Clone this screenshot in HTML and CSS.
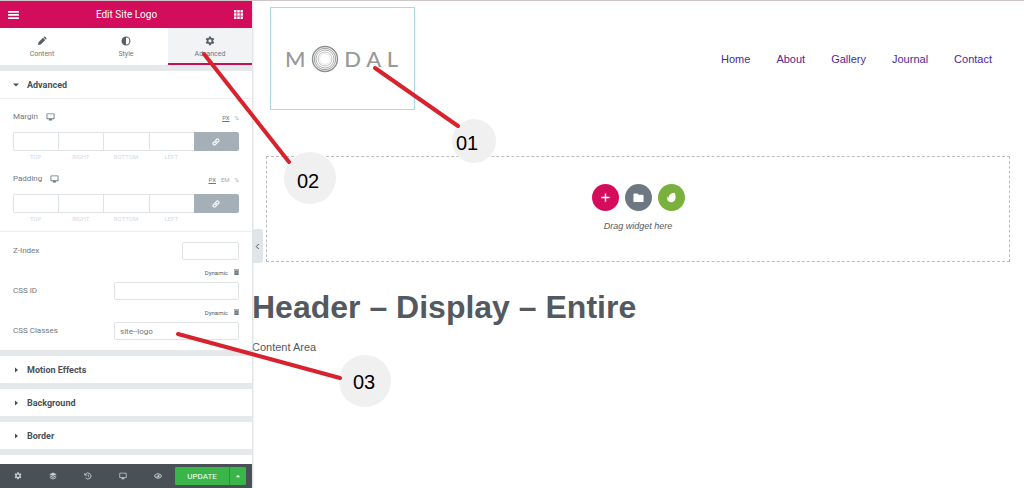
FILE: index.html
```html
<!DOCTYPE html>
<html lang="en">
<head>
<meta charset="utf-8">
<title>Edit Site Logo</title>
<link rel="stylesheet" href="styles.css">
</head>
<body>
<svg class="sprite" aria-hidden="true">
  <symbol id="gear" viewBox="0 0 24 24"><path fill-rule="evenodd" d="M9.700 1h4.600l.6 3.100 1.900 1.100 3-1.100 2.300 4-2.400 2.100v2.600l2.400 2.100-2.300 4-3-1.100-1.900 1.100-.6 3.100H9.700l-.6-3.100-1.900-1.100-3 1.100-2.300-4 2.400-2.100v-2.600L1.900 8.100l2.300-4 3 1.100 1.900-1.100zM12 7.700a3.800 3.800 0 1 0 0 7.600 3.800 3.800 0 0 0 0-7.600z"/></symbol>
  <symbol id="screen" viewBox="0 0 20 18"><path fill-rule="evenodd" d="M2 1h16a1 1 0 0 1 1 1v11a1 1 0 0 1-1 1h-5l1 3H6l1-3H2a1 1 0 0 1-1-1V2a1 1 0 0 1 1-1zm1 2v9h14V3z"/></symbol>
  <symbol id="link" viewBox="0 0 20 20"><g fill="none" stroke="currentColor" stroke-width="2.800" stroke-linecap="round"><path d="M8.500 11.500a3.600 3.600 0 0 1 0-5l3-3a3.500 3.500 0 0 1 5 5l-1.500 1.500"/><path d="M11.500 8.500a3.600 3.600 0 0 1 0 5l-3 3a3.500 3.500 0 0 1-5-5L5 10"/></g></symbol>
  <symbol id="trash" viewBox="0 0 10 12"><path d="M0 1h10v1.800H0zM1 3.800h8V12H1z"/><path d="M3.200 5v5.500M5 5v5.500M6.800 5v5.500" stroke="#fff" stroke-width=".6"/></symbol>
</svg>

<div class="app">
  <aside class="panel">
    <header class="panel-header">
      <button class="icon-button" aria-label="Menu"><svg class="menu-icon" viewBox="0 0 12 10"><path d="M0 1h12v2H0zM0 4.500h12v2H0zM0 8h12v2H0z"/></svg></button>
      <h1 class="panel-title">Edit Site Logo</h1>
      <button class="icon-button" aria-label="Widgets"><svg class="grid-icon" viewBox="0 0 11 11"><path d="M0 0h3v3H0zM4 0h3v3H4zM8 0h3v3H8zM0 4h3v3H0zM4 4h3v3H4zM8 4h3v3H8zM0 8h3v3H0zM4 8h3v3H4zM8 8h3v3H8z"/></svg></button>
    </header>
    <nav class="tabs">
      <button class="tab"><svg class="tab-icon" viewBox="0 0 20 20"><path d="M2 18l1-5.500L12 3.500l4.500 4.500-9 9zM13 2.500l1.200-1.200a1.500 1.500 0 0 1 2 0l2.500 2.500a1.500 1.500 0 0 1 0 2L17.500 7z"/></svg>Content</button>
      <button class="tab"><svg class="tab-icon" viewBox="0 0 20 20"><path fill-rule="evenodd" d="M10 1a9 9 0 1 1 0 18 9 9 0 0 1 0-18zm0 2.200a6.800 6.800 0 0 0 0 13.600z" transform="rotate(180 10 10)"/></svg>Style</button>
      <button class="tab tab-active"><svg class="tab-icon"><use href="#gear"/></svg>Advanced</button>
    </nav>
    <div class="sections">
      <section class="section">
        <button class="section-title"><svg class="caret" viewBox="0 0 8 8"><path d="M1 2.500h6L4 5.500z"/></svg>Advanced</button>
        <div class="controls">
          <fieldset class="dimension">
            <div class="dimension-head">
              <span class="label">Margin</span><svg class="device"><use href="#screen"/></svg>
              <span class="units"><button class="unit unit-active">PX</button><button class="unit">%</button></span>
            </div>
            <div class="dimension-grid">
              <input class="side" id="mt"><input class="side" id="mr"><input class="side" id="mb"><input class="side" id="ml">
              <button class="link-button" aria-label="Link values"><svg class="link-icon"><use href="#link"/></svg></button>
              <label class="side-name" for="mt">TOP</label><label class="side-name" for="mr">RIGHT</label><label class="side-name" for="mb">BOTTOM</label><label class="side-name" for="ml">LEFT</label>
            </div>
          </fieldset>
          <fieldset class="dimension">
            <div class="dimension-head">
              <span class="label">Padding</span><svg class="device"><use href="#screen"/></svg>
              <span class="units"><button class="unit unit-active">PX</button><button class="unit">EM</button><button class="unit">%</button></span>
            </div>
            <div class="dimension-grid">
              <input class="side" id="pt"><input class="side" id="pr"><input class="side" id="pb"><input class="side" id="pl">
              <button class="link-button" aria-label="Link values"><svg class="link-icon"><use href="#link"/></svg></button>
              <label class="side-name" for="pt">TOP</label><label class="side-name" for="pr">RIGHT</label><label class="side-name" for="pb">BOTTOM</label><label class="side-name" for="pl">LEFT</label>
            </div>
          </fieldset>
          <div class="fields">
            <div class="field"><label class="label" for="z">Z-Index</label><input class="text-box text-box-small" id="z"></div>
            <div class="dynamic">Dynamic<svg class="trash"><use href="#trash"/></svg></div>
            <div class="field"><label class="label" for="cid">CSS ID</label><input class="text-box" id="cid"></div>
            <div class="dynamic">Dynamic<svg class="trash"><use href="#trash"/></svg></div>
            <div class="field"><label class="label" for="cls">CSS Classes</label><input class="text-box" id="cls" value="site--logo"></div>
          </div>
        </div>
      </section>
      <section class="section"><button class="section-title"><svg class="caret" viewBox="0 0 8 8"><path d="M3 1.500v5l3-2.500z"/></svg>Motion Effects</button></section>
      <section class="section"><button class="section-title"><svg class="caret" viewBox="0 0 8 8"><path d="M3 1.500v5l3-2.500z"/></svg>Background</button></section>
      <section class="section"><button class="section-title"><svg class="caret" viewBox="0 0 8 8"><path d="M3 1.500v5l3-2.500z"/></svg>Border</button></section>
      <section class="section section-next"></section>
    </div>
    <footer class="panel-footer">
      <button class="tool" aria-label="Settings"><svg class="tool-icon"><use href="#gear"/></svg></button>
      <button class="tool" aria-label="Navigator"><svg class="tool-icon" viewBox="0 0 20 20"><path d="M10 1l9 4.500-9 4.500-9-4.500zM3 8.500l7 3.500 7-3.500 2 1.300-9 4.500-9-4.500zM3 13l7 3.500 7-3.500 2 1.300-9 4.700-9-4.700z"/></svg></button>
      <button class="tool" aria-label="History"><svg class="tool-icon" viewBox="0 0 20 20"><g fill="none" stroke="currentColor" stroke-width="2.200"><path d="M4 5.500a7.500 7.500 0 1 1 0 9M10.500 6v4.500l3 2"/></g><path d="M1 2v7h7z"/></svg></button>
      <button class="tool" aria-label="Responsive mode"><svg class="tool-icon"><use href="#screen"/></svg></button>
      <button class="tool" aria-label="Preview"><svg class="tool-icon" viewBox="0 0 20 20"><path fill-rule="evenodd" d="M0 10c5-9 15-9 20 0-5 9-15 9-20 0zm2.500 0c3.500 6 11.500 6 15 0-3.500-6-11.500-6-15 0z"/><path d="M10 6a4 4 0 1 1-4 4l3 .5z"/></svg></button>
      <div class="publish">
        <button class="update">UPDATE</button>
        <button class="update-more" aria-label="Save options"><svg class="caret-up" viewBox="0 0 8 6"><path d="M1 5h6L4 1z"/></svg></button>
      </div>
    </footer>
    <button class="collapse" aria-label="Hide panel"><svg class="chevron" viewBox="0 0 6 8"><path d="M4.500 1l-3 3 3 3" fill="none" stroke="currentColor" stroke-width="1.200"/></svg></button>
  </aside>

  <main class="preview">
    <div class="site-header">
      <a class="logo" href="#" aria-label="Modal">
        <span>M</span>
        <svg class="logo-rings" viewBox="0 0 28 28"><g fill="none" stroke="#8f8f8f"><circle cx="14" cy="14" r="12.500" stroke-width="1.400"/><circle cx="14" cy="14" r="10.700" stroke-width=".9"/><circle cx="14" cy="14" r="9" stroke="#aaa" stroke-width=".9"/><circle cx="14" cy="14" r="7" stroke="#b8b8b8" stroke-width=".8"/><circle cx="14" cy="14" r="5.400" stroke="#d8d8d8" stroke-width=".6"/></g></svg>
        <span>D</span><span>A</span><span>L</span>
      </a>
      <nav class="site-nav"><a href="#">Home</a><a href="#">About</a><a href="#">Gallery</a><a href="#">Journal</a><a href="#">Contact</a></nav>
    </div>
    <div class="drop-zone">
      <div class="drop-actions">
        <button class="round round-add" aria-label="Add section"><svg class="round-icon" viewBox="0 0 12 12"><path d="M5.200 1.500h1.600v3.700h3.700v1.600H6.800v3.700H5.200V6.800H1.500V5.200h3.700z"/></svg></button>
        <button class="round round-folder" aria-label="Add template"><svg class="round-icon" viewBox="0 0 12 12"><path d="M1.500 1.500h3.300L6.200 3h4.300a1 1 0 0 1 1 1v6a1 1 0 0 1-1 1h-9a1 1 0 0 1-1-1V2.500a1 1 0 0 1 1-1z"/></svg></button>
        <button class="round round-leaf" aria-label="Template kits"><svg class="round-icon" viewBox="0 0 12 12"><path d="M9.200.8c1.600 2 1.900 5.900.4 8.200-1.500 2.400-4.600 2.900-6.600 1.400C1 8.800.9 6.200 2 4.500c.1 1 .3 1.700.7 2.300C2.500 3.500 5.500 1 9.200.8z"/></svg></button>
      </div>
      <p class="drop-text">Drag widget here</p>
    </div>
    <h2 class="page-title">Header – Display – Entire</h2>
    <p class="page-text">Content Area</p>
  </main>

  <svg class="callouts" viewBox="0 0 1024 488">
    <g class="callout-discs"><circle cx="474" cy="141" r="22"/><circle cx="310" cy="178" r="26"/><circle cx="365" cy="381" r="26"/></g>
    <g class="callout-lines"><path d="M375 68L458 126"/><path d="M204 54L289 162"/><path d="M178 334L340 378"/></g>
    <g class="callout-numbers"><text x="467" y="150">01</text><text x="308" y="188">02</text><text x="364" y="389">03</text></g>
  </svg>
</div>
</body>
</html>
```
FILE: styles.css
```css
* { box-sizing: border-box; }
body { margin: 0; font-family: Roboto, sans-serif; color: #54595f; background: #fff; }
button { font: inherit; color: inherit; background: none; border: 0; padding: 0; }
svg { fill: currentColor; display: block; flex: none; }
p, h1, h2 { margin: 0; }
.sprite { display: none; }

.app { position: relative; display: flex; height: 100vh; overflow: hidden; border-top: 1px solid #cfc5c9; }

.panel { position: relative; display: flex; flex-direction: column; width: 252px; flex: none; background: #e6e9ec; box-shadow: 1px 0 2px #d5d8dc; }
.panel-header { display: flex; align-items: center; justify-content: space-between; height: 27px; flex: none; padding: 0 9px 0 8px; background: #d30c5c; color: #fff; }
.panel-title { font-size: 10px; font-weight: 400; }
.menu-icon { width: 11px; height: 9px; }
.grid-icon { width: 9px; height: 9px; }

.tabs { display: grid; grid-template-columns: repeat(3, 1fr); height: 37px; flex: none; background: #fff; }
.tab { display: flex; flex-direction: column; align-items: center; gap: 4px; padding-top: 8px; font-size: 7px; line-height: 9px; color: #6d7882; border-bottom: 2px solid transparent; }
.tab-active { background: #f1f3f5; border-bottom-color: #c50f57; }
.tab-icon { width: 10px; height: 10px; color: #556068; }

.sections { flex: 1; min-height: 0; overflow: hidden; display: flex; flex-direction: column; gap: 6px; padding-top: 6px; }
.section { flex: none; background: #fff; }
.section-title { display: flex; align-items: center; gap: 7px; width: 100%; height: 27px; padding-left: 12px; font-size: 9px; font-weight: 700; color: #495157; }
.section-next { height: 27px; }
.caret { width: 8px; height: 8px; }

.controls { border-top: 1px solid #eceef0; padding-bottom: 10px; }
.dimension { border: 0; margin: 0; padding: 12px 13px 0; }
.dimension-head { display: flex; align-items: center; height: 12px; margin-bottom: 9px; }
.dimension + .dimension { padding-top: 11px; }
.label { font-size: 8px; line-height: 12px; color: #6d7882; }
.device { width: 9px; height: 8px; margin-left: 8px; color: #6d7882; }
.units { display: flex; gap: 5px; margin-left: auto; font-size: 6px; color: #a4afb7; }
.unit-active { color: #6d7882; text-decoration: underline; }
.dimension-grid { display: grid; grid-template-columns: repeat(5, 1fr); grid-template-rows: 19px 11px; }
.side { min-width: 0; border: 1px solid #dfe3e6; border-right: 0; padding: 0 4px; background: #fff; }
.side:first-child { border-radius: 2px 0 0 2px; }
.link-button { display: grid; place-items: center; background: #a4afb7; color: #fff; border-radius: 0 2px 2px 0; }
.link-icon { width: 8px; height: 8px; }
.side-name { font-size: 6px; line-height: 12px; text-align: center; color: #d5dadf; }

.fields { border-top: 1px solid #eceef0; margin-top: 7px; padding: 10px 13px 0; }
.field { display: flex; align-items: center; justify-content: space-between; }
.text-box { width: 125px; height: 18px; padding: 0 5px; border: 1px solid #dfe3e6; border-radius: 2px; background: #fff; font: 8px Roboto, sans-serif; color: #6d7882; }
.text-box-small { width: 57px; }
.dynamic { display: flex; align-items: center; justify-content: flex-end; gap: 6px; height: 22px; padding-top: 2px; font-size: 6px; color: #556068; }
.trash { width: 5px; height: 6px; }

.panel-footer { display: flex; align-items: center; height: 24px; flex: none; padding-right: 6px; background: #495157; color: #c5cdd3; }
.tool { flex: 1; display: grid; place-items: center; height: 100%; }
.tool-icon { width: 8px; height: 8px; }
.publish { display: flex; height: 18px; background: #39b54a; color: #fff; border-radius: 1px; }
.update { width: 54px; font-size: 8px; }
.update-more { display: grid; place-items: center; width: 17px; border-left: 1px solid #2d963b; }
.caret-up { width: 6px; height: 4px; }
.collapse { position: absolute; left: 100%; top: 228px; display: grid; place-items: center; width: 11px; height: 34px; background: #e2e5e8; border-radius: 0 3px 3px 0; }
.chevron { width: 5px; height: 7px; }

.preview { flex: 1; min-width: 0; font-family: "Liberation Sans", Arial, sans-serif; }
.site-header { display: flex; align-items: center; justify-content: space-between; padding: 6px 32px 0 18px; }
.logo { display: flex; align-items: center; justify-content: space-between; width: 145px; height: 103px; padding: 0 16px 0 14px; border: 1px solid #a9dbe4; font: 500 22px Lato, sans-serif; color: #999; text-decoration: none; }
.logo-rings { width: 28px; height: 28px; }
.site-nav { display: flex; gap: 26px; font-size: 11px; }
.site-nav a { color: #4b2a94; text-decoration: none; }
.drop-zone { display: flex; flex-direction: column; align-items: center; margin: 46px 14px 0; padding: 27px 0 29px; border: 1px dashed #bdbdbd; }
.drop-actions { display: flex; gap: 6px; }
.round { display: grid; place-items: center; width: 27px; height: 27px; border-radius: 50%; color: #fff; }
.round-add { background: #d30c5c; }
.round-folder { background: #6d7882; }
.round-leaf { background: #7ab03c; }
.round-icon { width: 11px; height: 11px; }
.drop-text { margin-top: 9px; font-size: 9px; line-height: 12px; font-style: italic; }
.page-title { margin-top: 26px; font-size: 32px; line-height: 38px; }
.page-text { margin-top: 14px; font-size: 11px; line-height: 14px; }

.callouts { position: absolute; left: 0; top: -1px; width: 1024px; height: 488px; pointer-events: none; }
.callout-discs { fill: #f0f0f0; }
.callout-lines { stroke: #d8232e; stroke-width: 4; stroke-linecap: round; }
.callout-numbers { fill: #000; font: 20px "Liberation Sans Narrow", "Liberation Sans", sans-serif; text-anchor: middle; }
```
